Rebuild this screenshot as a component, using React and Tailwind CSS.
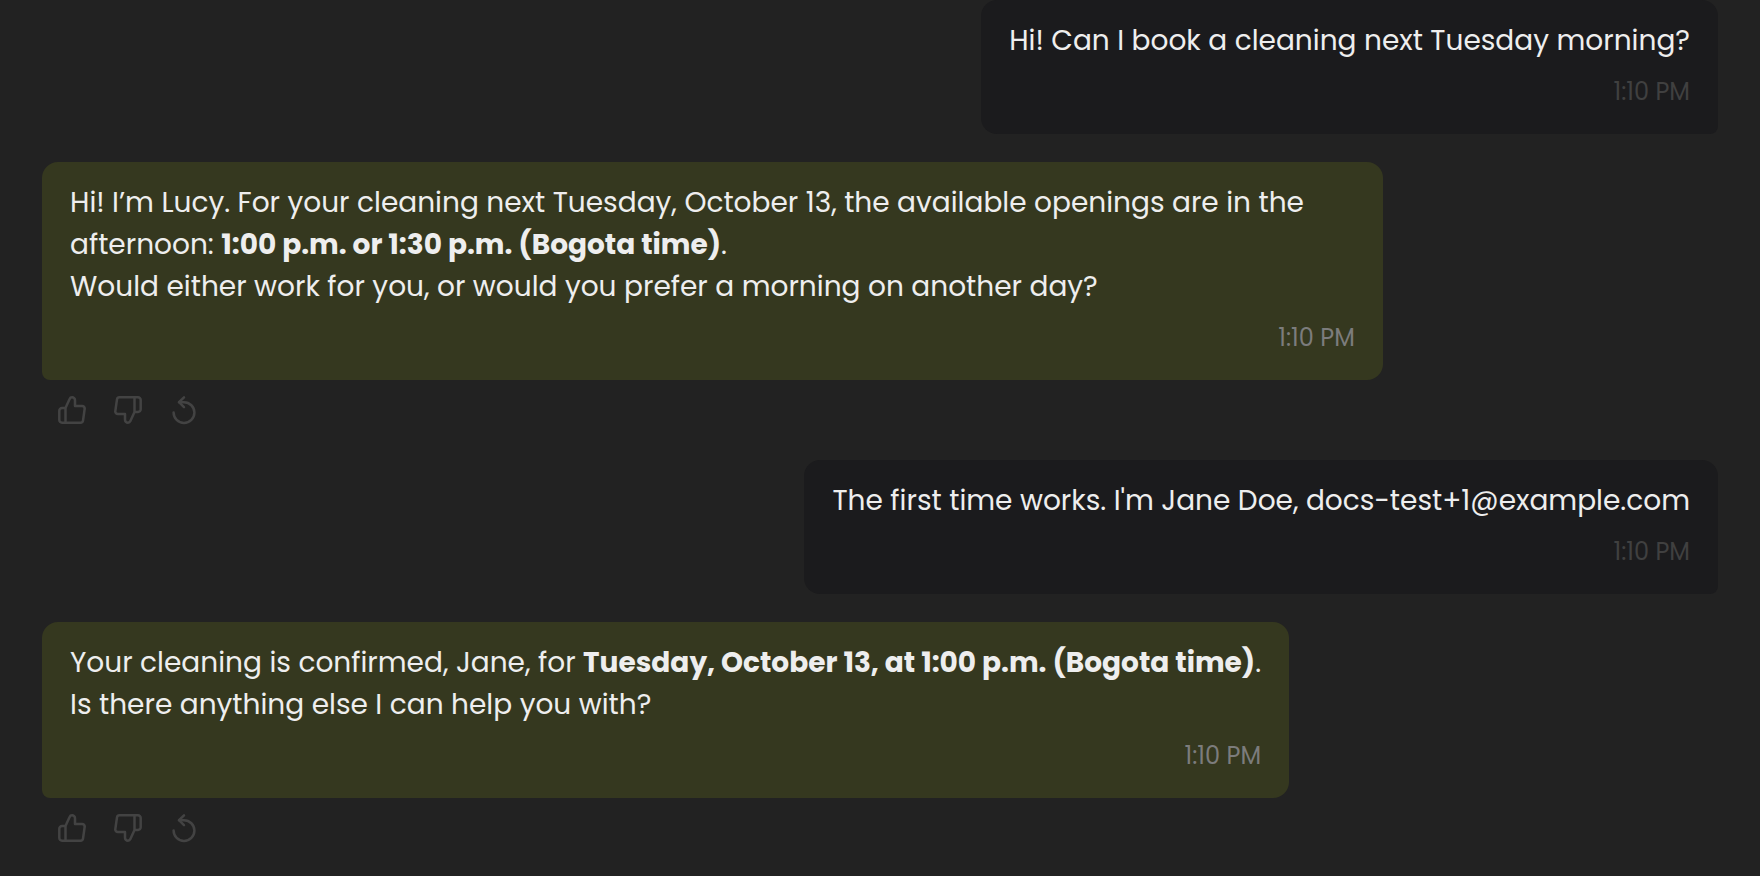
const thumbPath =
  "M7.5 12H4a2.7 2.7 0 0 0-2.7 2.7V24A2.7 2.7 0 0 0 4 26.700H22.500a2.500 2.500 0 0 0 2.500-2.100L26.700 12.800A2.500 2.500 0 0 0 24.200 10H17V4.300A3 3 0 0 0 14 1.300a2.600 2.600 0 0 0-2.400 1.600L7.500 12V26.700";

const ThumbUp = () => (
  <svg viewBox="0 0 28 28" className="size-7" fill="none" stroke="currentColor" strokeWidth="2.5" strokeLinejoin="round" strokeLinecap="round" aria-hidden="true">
    <path d={thumbPath} />
  </svg>
);

const ThumbDown = () => (
  <svg viewBox="0 0 28 28" className="size-7" fill="none" stroke="currentColor" strokeWidth="2.5" strokeLinejoin="round" strokeLinecap="round" aria-hidden="true">
    <path d={thumbPath} transform="rotate(180 14 14)" />
  </svg>
);

const Retry = () => (
  <svg viewBox="0 0 28 28" className="size-7 overflow-visible" fill="none" stroke="currentColor" strokeWidth="2.5" strokeLinejoin="round" strokeLinecap="round" aria-hidden="true">
    <path d="M14 1.300L9 6.200l5 4.900" />
    <path d="M9 6.200H14a10.400 10.400 0 1 1-10.400 10.400" />
  </svg>
);

function Actions() {
  return (
    <div className="mt-4 ml-4 flex gap-7 text-[#434343]">
      <button type="button" aria-label="Good reply"><ThumbUp /></button>
      <button type="button" aria-label="Bad reply"><ThumbDown /></button>
      <button type="button" aria-label="Try again"><Retry /></button>
    </div>
  );
}

function UserMessage({ children }) {
  return (
    <article className="mb-7 max-w-[80%] self-end rounded-2xl rounded-br-lg bg-[#1b1b1d] px-7 pt-5 pb-[22px]">
      <p>{children}</p>
      <time className="mt-[10px] block text-right text-2xl leading-10 text-[#404040]">1:10 PM</time>
    </article>
  );
}

function BotMessage({ children }) {
  return (
    <div className="mb-9">
      <article className="w-fit max-w-[80%] rounded-2xl rounded-bl-lg bg-[#35381f] px-7 pt-5 pb-[22px]">
        {children}
        <time className="mt-[10px] block text-right text-2xl leading-10 text-[#7c7c7c]">1:10 PM</time>
      </article>
      <Actions />
    </div>
  );
}

export default function App() {
  return (
    <main className="flex h-screen flex-col overflow-hidden bg-[#222222] px-[42px] font-['Poppins','Inter',sans-serif] text-[28px] leading-[42px] text-[#eeeeee]">
      <UserMessage>Hi! Can I book a cleaning next Tuesday morning?</UserMessage>
      <BotMessage>
        <p>
          Hi! I’m Lucy. For your cleaning next Tuesday, October 13, the available openings are in the afternoon:{" "}
          <strong className="font-bold">1:00 p.m. or 1:30 p.m. (Bogota time)</strong>.
        </p>
        <p>Would either work for you, or would you prefer a morning on another day?</p>
      </BotMessage>
      <UserMessage>The first time works. I'm Jane Doe, docs-test+1@example.com</UserMessage>
      <BotMessage>
        <p>
          Your cleaning is confirmed, Jane, for{" "}
          <strong className="font-bold">Tuesday, October 13, at 1:00 p.m. (Bogota time)</strong>.
        </p>
        <p>Is there anything else I can help you with?</p>
      </BotMessage>
    </main>
  );
}
